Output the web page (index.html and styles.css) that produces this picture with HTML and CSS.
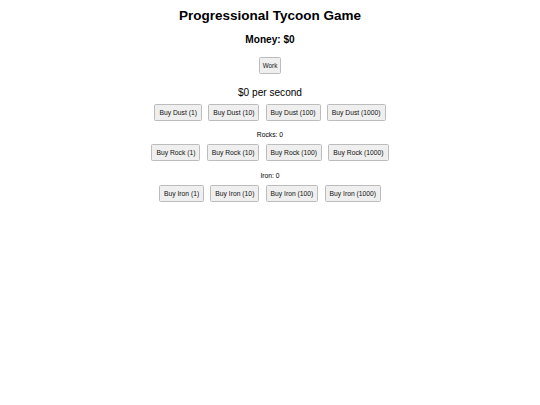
FILE: index.html
```html
<!DOCTYPE html>
<html lang="en">
<head>
<meta charset="utf-8">
<title>Progressional Tycoon Game</title>
<link rel="stylesheet" href="styles.css">
</head>
<body>
<main class="game">
  <h1 class="title">Progressional Tycoon Game</h1>
  <h2 class="money">Money: $0</h2>
  <button class="btn btn-work" type="button">Work</button>
  <p class="rate">$0 per second</p>
  <div class="row row-dust">
    <button class="btn" type="button">Buy Dust (1)</button>
    <button class="btn" type="button">Buy Dust (10)</button>
    <button class="btn" type="button">Buy Dust (100)</button>
    <button class="btn" type="button">Buy Dust (1000)</button>
  </div>
  <p class="count count-rocks">Rocks: 0</p>
  <div class="row row-rock">
    <button class="btn" type="button">Buy Rock (1)</button>
    <button class="btn" type="button">Buy Rock (10)</button>
    <button class="btn" type="button">Buy Rock (100)</button>
    <button class="btn" type="button">Buy Rock (1000)</button>
  </div>
  <p class="count count-iron">Iron: 0</p>
  <div class="row row-iron">
    <button class="btn" type="button">Buy Iron (1)</button>
    <button class="btn" type="button">Buy Iron (10)</button>
    <button class="btn" type="button">Buy Iron (100)</button>
    <button class="btn" type="button">Buy Iron (1000)</button>
  </div>
</main>
</body>
</html>
```

FILE: styles.css
```css
html, body {
  margin: 0;
  padding: 0;
  background: #ffffff;
}

body {
  font-family: "Liberation Sans", Arial, sans-serif;
  color: #000000;
}

.game {
  display: flex;
  flex-direction: column;
  align-items: center;
  text-align: center;
}

.title {
  margin: 8px 0 0;
  font-size: 13.5px;
  line-height: 16px;
  font-weight: bold;
}

.money {
  margin: 9.5px 0 0;
  font-size: 10.1px;
  line-height: 12px;
  font-weight: bold;
}

.btn {
  margin: 0;
  font-family: "Liberation Sans", Arial, sans-serif;
  font-size: 6.75px;
  line-height: 8px;
  padding: 3.5px 4px;
  color: #111111;
  background: #efefef;
  border: 1px solid #bcbcbc;
  border-radius: 1.5px;
  cursor: pointer;
  white-space: nowrap;
}

.btn-work {
  margin-top: 11px;
  font-size: 6.3px;
  padding: 4px 3px;
  line-height: 7px;
}

.rate {
  margin: 13px 0 0;
  font-size: 10.1px;
  line-height: 12px;
}

.row {
  display: flex;
  justify-content: center;
  gap: 6.2px;
}

.row-dust {
  margin-top: 5.5px;
}

.row-rock {
  margin-top: 5.6px;
}

.row-iron {
  margin-top: 5.2px;
}

.count {
  margin: 0;
  font-size: 6.75px;
  line-height: 8px;
}

.count-rocks {
  margin-top: 9.7px;
}

.count-iron {
  margin-top: 10.7px;
}
```
